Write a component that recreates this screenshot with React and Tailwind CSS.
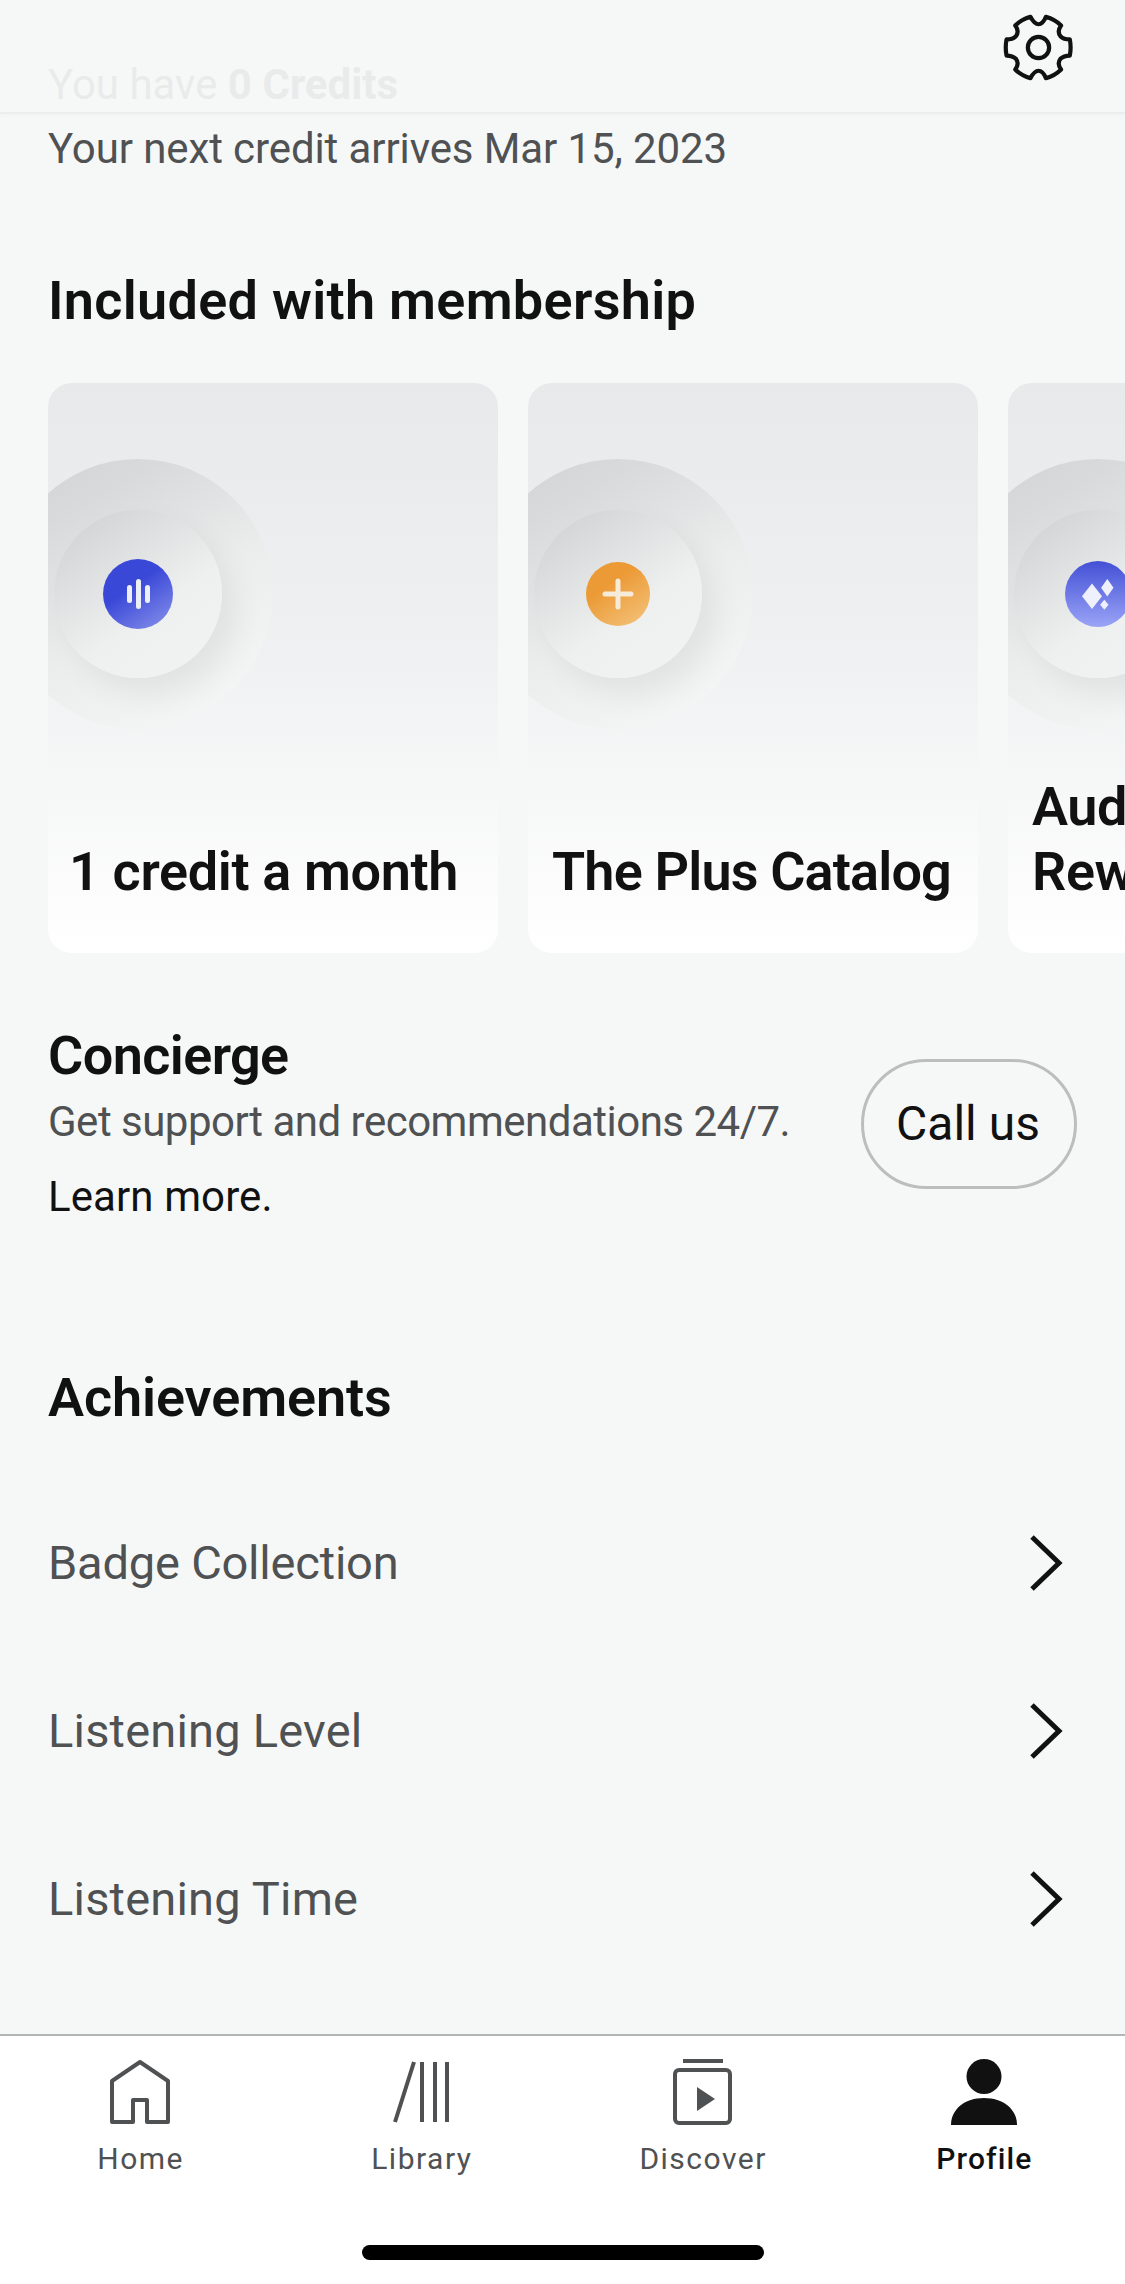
const cards = [
  { title: '1 credit a month', icon: 'bars', titleClass: 'ml-[-3px] tracking-[-0.35px]' },
  { title: 'The Plus Catalog', icon: 'plus', titleClass: 'tracking-[-0.85px]' },
  { title: 'Audible\nRewards', icon: 'diamonds', titleClass: 'tracking-[-0.4px]' },
]

const rows = [
  { text: 'Badge Collection', className: 'tracking-[-0.2px]' },
  { text: 'Listening Level', className: 'tracking-[0.2px]' },
  { text: 'Listening Time', className: 'tracking-[0.2px]' },
]

function CardIcon({ icon }) {
  if (icon === 'bars') {
    return (
      <div className="flex h-[70px] w-[70px] items-center justify-center gap-[4px] rounded-full bg-[linear-gradient(145deg,#3a48d8_40%,#8a94ea_100%)]">
        <span className="h-[18px] w-[5px] rounded-full bg-[#eceef8]" />
        <span className="h-[30px] w-[5px] rounded-full bg-[#eceef8]" />
        <span className="h-[18px] w-[5px] rounded-full bg-[#eceef8]" />
      </div>
    )
  }
  if (icon === 'plus') {
    return (
      <div className="flex h-[64px] w-[64px] items-center justify-center rounded-full bg-[linear-gradient(145deg,#ec9a36_35%,#f3c57e_100%)]">
        <svg width="32" height="32" viewBox="0 0 32 32" stroke="#f6ead8" strokeWidth="5" strokeLinecap="round">
          <path d="M16 3v26M3 16h26" />
        </svg>
      </div>
    )
  }
  return (
    <div className="flex h-[66px] w-[66px] shrink-0 items-center justify-center rounded-full bg-[linear-gradient(180deg,#4350d6_0%,#9aa4f6_100%)]">
      <svg width="32" height="31" viewBox="0 0 32 31" fill="#eef0fb">
        <path d="M10 4.6L20 17.3L10 30L0 17.3Z" />
        <path d="M25.3 0L31.5 8.7L25.3 17.4L19.1 8.7Z" />
        <path d="M22.3 20.7L26.5 25.7L22.3 30.7L18.1 25.7Z" />
      </svg>
    </div>
  )
}

function Card({ title, icon, titleClass }) {
  return (
    <div className="flex h-[570px] w-[450px] shrink-0 flex-col overflow-hidden rounded-[24px] bg-[linear-gradient(180deg,#e8e9ea_0%,#eff0f1_45%,#ffffff_100%)]">
      {/* circles run off the left edge of the card */}
      <div className="mt-[76px] ml-[-45px] flex h-[270px] w-[270px] shrink-0 items-center justify-center rounded-full bg-[linear-gradient(150deg,#cfd1d2_0%,#d8dadb_22%,#ebecec_55%,#f3f4f4_85%)]">
        <div className="flex h-[168px] w-[168px] items-center justify-center rounded-full bg-[linear-gradient(145deg,#d2d4d5_10%,#eef0f0_60%,#f2f3f3_100%)] shadow-[14px_18px_30px_rgba(0,0,0,0.06)]">
          <CardIcon icon={icon} />
        </div>
      </div>
      <div className={`mt-auto mb-[49px] px-6 text-[54px] leading-[65px] font-semibold whitespace-pre text-[#111111] ${titleClass}`}>
        {title}
      </div>
    </div>
  )
}

function Chevron() {
  return (
    <svg width="34" height="56" viewBox="0 0 34 56" fill="none" stroke="#111111" strokeWidth="5">
      <path d="M3 2l27 26L3 54" />
    </svg>
  )
}

function Gear() {
  return (
    <svg width="75" height="71" viewBox="60 30 230 220" fill="none" stroke="#111111" strokeWidth="13" strokeLinejoin="round">
      <path d="M150 45C158 60 166 68 175 68C184 68 192 60 198 45C216 50 232 59 245 72C236 84 236 96 243 105C250 112 260 115 272 115C275 130 275 150 272 165C260 165 250 168 243 175C236 184 236 196 245 208C232 221 216 230 198 235C192 220 184 212 175 212C166 212 158 220 150 235C132 230 116 221 103 208C112 196 112 184 105 175C98 168 88 165 76 165C73 150 73 130 76 115C88 115 98 112 105 105C112 96 112 84 103 72C116 59 132 50 150 45Z" />
      <circle cx="175" cy="140" r="33" />
    </svg>
  )
}

const tabs = [
  {
    label: 'Home',
    icon: (
      <svg width="64" height="66" viewBox="0 0 64 66" fill="none" stroke="#4f5152" strokeWidth="4">
        <path d="M31 3L3 22V63H24V41H38V63H59V22Z" strokeLinejoin="round" />
      </svg>
    ),
  },
  {
    label: 'Library',
    icon: (
      <svg width="64" height="66" viewBox="0 0 64 66" fill="none" stroke="#4f5152" strokeWidth="4">
        <path d="M24 3L5 63M32 3V63M45 3V63M57 3V63" />
      </svg>
    ),
  },
  {
    label: 'Discover',
    icon: (
      <svg width="64" height="66" viewBox="0 0 64 66" fill="none" stroke="#4f5152" strokeWidth="4">
        <path d="M12 2H52" strokeWidth="4" />
        <rect x="4" y="11" width="55" height="53" rx="4" />
        <path d="M26 28L44 40L26 52Z" fill="#4f5152" stroke="none" />
      </svg>
    ),
  },
  {
    label: 'Profile',
    active: true,
    icon: (
      <svg width="66" height="66" viewBox="0 0 66 66" fill="#111111">
        <circle cx="33" cy="17.5" r="17.5" />
        <path d="M0 66C0 50 14 39 33 39S66 50 66 66Z" />
      </svg>
    ),
  },
]

export default function App() {
  return (
    <div className="flex h-[2284px] w-[1125px] flex-col overflow-hidden bg-[#f6f8f8] font-['Roboto',sans-serif]">
      <main className="min-h-0 flex-1">
        {/* top bar, the page has scrolled under it */}
        <header className="flex h-[114px] items-start justify-between border-b-[2px] border-[#eceeee] px-12 shadow-[0_3px_4px_rgba(0,0,0,0.015)]">
          <div className="mt-[60px] text-[42px] leading-[50px] text-[#e9ebeb]">
            You have <span className="font-bold">0 Credits</span>
          </div>
          <div className="mt-[12px] mr-[1px]">
            <Gear />
          </div>
        </header>

        <p className="mt-[10px] px-12 text-[42px] leading-[50px] tracking-[-0.1px] text-[#4f5152]">Your next credit arrives Mar 15, 2023</p>

        <h2 className="mt-[95px] px-12 text-[54px] leading-[64px] font-semibold tracking-[0.3px] text-[#111111]">Included with membership</h2>

        <div className="mt-[50px] flex gap-[30px] overflow-hidden pl-12">
          {cards.map((card) => (
            <Card key={card.title} title={card.title} icon={card.icon} titleClass={card.titleClass} />
          ))}
        </div>

        <section className="mt-[73px] flex items-start justify-between px-12">
          <div>
            <h3 className="text-[54px] leading-[60px] font-semibold tracking-[-0.6px] text-[#111111]">Concierge</h3>
            <p className="mt-[11px] text-[42px] leading-[50px] tracking-[-0.5px] text-[#4f5152]">Get support and recommendations 24/7.</p>
            <p className="mt-[25px] text-[42px] leading-[50px] tracking-[0.1px] text-[#111111]">Learn more.</p>
          </div>
          <button className="mt-[33px] flex h-[130px] w-[216px] items-center justify-center rounded-full border-[3px] border-[#bcbebe] pr-[2px] text-[48px] text-[#111111]">
            Call us
          </button>
        </section>

        <h2 className="mt-[144px] px-12 text-[54px] leading-[64px] font-semibold tracking-[-0.1px] text-[#111111]">Achievements</h2>

        <ul className="mt-[49px] px-12">
          {rows.map((row) => (
            <li key={row.text} className={`flex h-[168px] items-center justify-between pr-[14px] text-[47px] text-[#4f5152] ${row.className}`}>
              <span>{row.text}</span>
              <Chevron />
            </li>
          ))}
        </ul>
      </main>

      <nav className="h-[250px] shrink-0 border-t-[2px] border-[#b3b4b4] bg-white">
        <div className="grid grid-cols-4 pt-[23px]">
          {tabs.map((tab) => (
            <div key={tab.label} className="flex flex-col items-center">
              {tab.icon}
              <span className={`mt-[14px] text-[30px] leading-[40px] ${tab.active ? 'font-medium tracking-[1.1px] text-[#111111]' : 'tracking-[1.5px] text-[#4f5152]'}`}>
                {tab.label}
              </span>
            </div>
          ))}
        </div>
        <div className="mx-auto mt-[66px] h-[15px] w-[402px] rounded-full bg-black" />
      </nav>
    </div>
  )
}
